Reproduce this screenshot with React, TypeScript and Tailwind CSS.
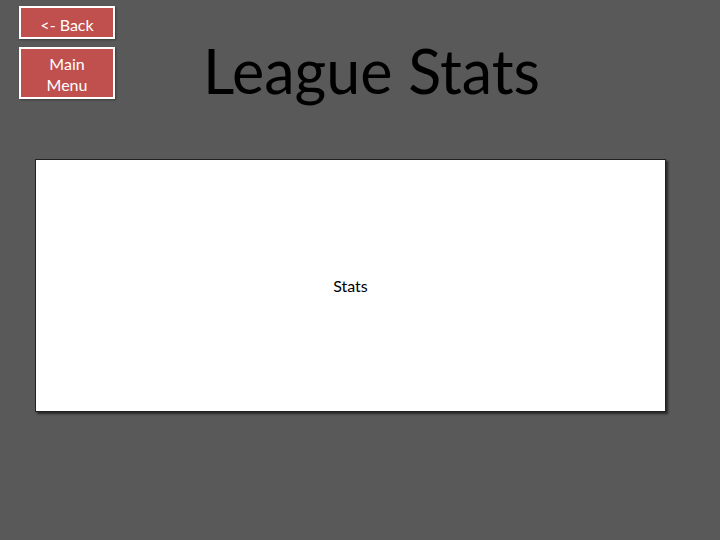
import React from 'react';

const NavButton: React.FC<{ children: React.ReactNode; className?: string }> = ({ children, className }) => (
  <button
    className={`w-[96px] border-2 border-white bg-[#c0504d] text-white text-[16px] leading-[21px] shadow-[1px_1px_2px_rgba(0,0,0,0.35)] ${className ?? ''}`}
  >
    {children}
  </button>
);

export default function App() {
  return (
    <div className="w-[720px] h-[540px] bg-[#595959] font-['Lato','Open_Sans',sans-serif] overflow-hidden">
      {/* Header */}
      <div className="flex items-start">
        <div className="flex flex-col gap-[8px] pl-[19px] pt-[6px]">
          <NavButton className="h-[33px] pt-[3px]">&lt;- Back</NavButton>
          <NavButton className="h-[52px] px-2 pt-[1px]">Main Menu</NavButton>
        </div>
        <h1 className="ml-[88px] mt-[36px] text-[61px] leading-[70px] text-black">League Stats</h1>
      </div>

      {/* Stats panel */}
      <div className="ml-[35px] mt-[53px] w-[631px] h-[253px] bg-white border border-[#222] shadow-[2px_2px_2px_rgba(0,0,0,0.55)] flex items-center justify-center">
        <span className="text-[16px] text-black">Stats</span>
      </div>
    </div>
  );
}
